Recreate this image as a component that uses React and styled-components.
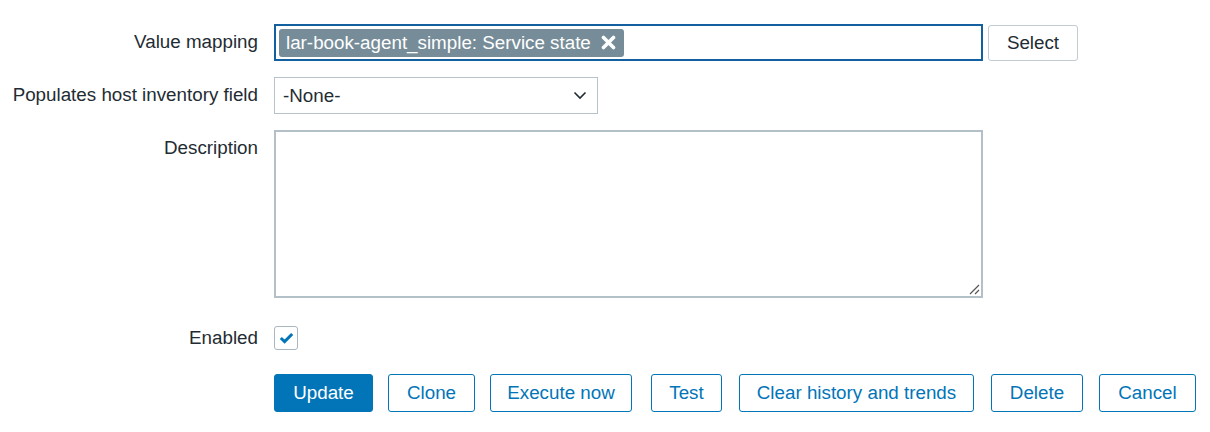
import React from "react";
import styled, { createGlobalStyle } from "styled-components";

const Global = createGlobalStyle`
  html, body { margin: 0; padding: 0; background: #fff; }
  body { font-family: "Liberation Sans", Arial, sans-serif; color: #1f2c33; }
`;

const Form = styled.div`
  display: grid;
  grid-template-columns: 258px 1fr;
  column-gap: 16px;
  padding-top: 24px;
  font-size: 18.8px;
`;

const Label = styled.div`
  text-align: right;
  line-height: 36px;
  white-space: nowrap;
  margin-top: ${(p) => p.$mt || 0}px;
`;

const Field = styled.div`
  display: flex;
  align-items: center;
  gap: 5px;
  margin-top: ${(p) => p.$mt || 0}px;
`;

const MultiSelect = styled.div`
  box-sizing: border-box;
  width: 709px;
  height: 37px;
  border: 2px solid #1360a0;
  display: flex;
  align-items: center;
  padding-left: 3px;
`;

const Tag = styled.span`
  display: inline-flex;
  align-items: center;
  gap: 10px;
  height: 28px;
  padding: 0 8px 0 7px;
  background: #768d99;
  color: #fff;
  border-radius: 3px;
  white-space: nowrap;
`;

const GrayButton = styled.button`
  box-sizing: border-box;
  width: 90px;
  height: 36px;
  padding: 0;
  border: 1px solid #c1cbd1;
  border-radius: 3px;
  background: #fff;
  color: #1f2c33;
  font: inherit;
`;

const Select = styled.div`
  box-sizing: border-box;
  width: 324px;
  height: 37px;
  border: 1px solid #b6c3ca;
  display: flex;
  align-items: center;
  justify-content: space-between;
  padding: 0 10px 0 8px;
`;

const TextArea = styled.div`
  position: relative;
  box-sizing: border-box;
  width: 709px;
  height: 168px;
  border: 2px solid #b3c0c8;
`;

const Grip = styled.svg`
  position: absolute;
  right: 1px;
  bottom: 1px;
`;

const Check = styled.div`
  box-sizing: border-box;
  width: 24px;
  height: 24px;
  border: 1px solid #a9b7c0;
  border-radius: 3px;
  display: flex;
  align-items: center;
  justify-content: center;
`;

const Buttons = styled.div`
  grid-column: 2;
  display: flex;
  margin-top: 18px;
`;

const Btn = styled.button`
  box-sizing: border-box;
  width: ${(p) => p.$w}px;
  height: 38px;
  margin-left: ${(p) => p.$ml || 0}px;
  padding: 0;
  border: 1.5px solid #0275b8;
  border-radius: 3px;
  background: ${(p) => (p.$primary ? "#0275b8" : "#fff")};
  color: ${(p) => (p.$primary ? "#fff" : "#0275b8")};
  font: inherit;
  white-space: nowrap;
`;

const buttons = [
  { t: "Update", w: 99, ml: 0, primary: true },
  { t: "Clone", w: 87, ml: 15 },
  { t: "Execute now", w: 142, ml: 15 },
  { t: "Test", w: 71, ml: 19 },
  { t: "Clear history and trends", w: 235, ml: 17 },
  { t: "Delete", w: 92, ml: 17 },
  { t: "Cancel", w: 97, ml: 16 },
];

export default function App() {
  return (
    <>
      <Global />
      <Form>
        <Label>Value mapping</Label>
        <Field>
          <MultiSelect>
            <Tag>
              lar-book-agent_simple: Service state
              <svg width="15" height="15" viewBox="0 0 15 15">
                <path d="M2.5 2.5 L12.5 12.5 M12.5 2.5 L2.5 12.5" stroke="#fff" strokeWidth="3.6" strokeLinecap="round" />
              </svg>
            </Tag>
          </MultiSelect>
          <GrayButton>Select</GrayButton>
        </Field>

        <Label $mt={16}>Populates host inventory field</Label>
        <Field $mt={16}>
          <Select>
            <span>-None-</span>
            <svg width="14" height="9" viewBox="0 0 14 9">
              <path d="M1.5 1.5 L7 7 L12.5 1.5" fill="none" stroke="#1f2c33" strokeWidth="1.6" />
            </svg>
          </Select>
        </Field>

        <Label $mt={16}>Description</Label>
        <Field $mt={16}>
          <TextArea>
            <Grip width="12" height="12" viewBox="0 0 12 12">
              <path d="M11 2 L2 11 M11 7 L7 11" stroke="#555" strokeWidth="1.2" />
            </Grip>
          </TextArea>
        </Field>

        <Label $mt={22}>Enabled</Label>
        <Field $mt={22}>
          <Check>
            <svg width="15" height="12" viewBox="0 0 15 12">
              <path d="M1.8 6 L5.6 9.6 L13.2 2" fill="none" stroke="#0275b8" strokeWidth="3" />
            </svg>
          </Check>
        </Field>

        <Buttons>
          {buttons.map((b) => (
            <Btn key={b.t} $primary={b.primary} $w={b.w} $ml={b.ml}>
              {b.t}
            </Btn>
          ))}
        </Buttons>
      </Form>
    </>
  );
}
